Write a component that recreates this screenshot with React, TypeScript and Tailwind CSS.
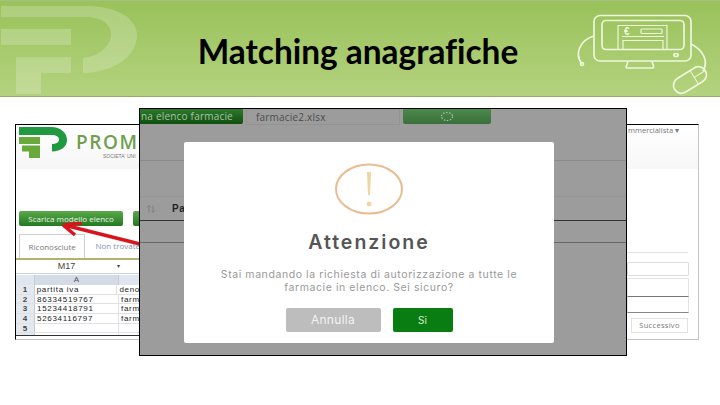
import { ArrowUpDown } from "lucide-react";

const sheetRows = [
  ["1", "partita iva", "deno"],
  ["2", "86334519767", "farm"],
  ["3", "15234418791", "farm"],
  ["4", "52634116797", "farm"],
  ["5", "", ""],
  ["", "", ""],
];

function HeaderMark() {
  return (
    <svg width="140" height="96" viewBox="0 0 140 96" className="shrink-0" fill="#fff">
      <path d="M1 5H85C118 5 137 18 137 34C137 55 115 71 83 72V57C100 55 111 45 111 33C111 22 100 16 85 16H1Z" fillOpacity="0.2" />
      <path d="M1 28H71V44H1Z" fillOpacity="0.2" />
      <path d="M16 56H71V72H41V93H16Z" fillOpacity="0.2" />
    </svg>
  );
}

function MonitorIcon() {
  return (
    <svg width="144" height="96" viewBox="576 0 144 96" className="shrink-0" fill="none" stroke="#eef6dc" strokeWidth="1.7">
      <rect x="594" y="14.5" width="97" height="45.5" rx="6" />
      <rect x="602" y="19.5" width="82" height="29" rx="4" />
      <path d="M618 48V24.5H667V48M623 48V39.5H663V48M622 35.5H664" strokeWidth="1.2" />
      <rect x="641" y="28" width="21" height="4.5" rx="0.8" strokeWidth="1.2" />
      <text x="624" y="34" fill="#eef6dc" stroke="none" fontSize="10" fontWeight="700" fontFamily="'Liberation Sans', sans-serif">€</text>
      <ellipse cx="676" cy="54" rx="2.2" ry="1.5" />
      <path d="M628 60C627 64 625 67 627 67H652C655 67 653 64 652 60" />
      <path d="M594 35C580 39 574 53 582 63" />
      <circle cx="582" cy="63" r="1.5" />
      <path d="M691 43C703 49 709 60 703 70" />
      <g transform="rotate(-32 690 79)">
        <rect x="672" y="71" width="36" height="16" rx="8" />
        <path d="M695 71.5V86.5M695 79H708" strokeWidth="1.1" />
      </g>
    </svg>
  );
}

function CompanyLogo() {
  return (
    <svg width="49" height="32" viewBox="0 0 49 32" className="shrink-0">
      <path d="M0 0H32C42 0 48 6 48 13C48 20 42 24 33 24.5V17C37 17 40 15.500 40 12.500C40 9.500 37 8 33 8H0Z" fill="#1f9a40" />
      <path d="M0 10H21V17H0Z" fill="#67a93a" />
      <path d="M3 18.500H21V31H10V24.500H3Z" fill="#67a93a" />
    </svg>
  );
}

function SheetTable() {
  return (
    <div className="flex h-[78px] w-full flex-col overflow-hidden border-t-2 border-b border-t-[#b8b070] border-b-[#333333] text-[#222] [font-family:'Liberation_Sans',sans-serif]">
      <div className="flex h-[14px] shrink-0 items-center border-b border-[#c9d2de] text-[9px] text-[#444]">
        <span className="w-[101px] text-center">M17</span>
        <span className="text-[6px]">▾</span>
      </div>
      <div className="mt-[1px] flex h-[10px] shrink-0 bg-[#dfe6ef] text-[8px] text-[#555]">
        <span className="w-[19px] border-r border-[#c3ccd8]" />
        <span className="w-[84px] border-r border-[#c3ccd8] bg-[#d3dbe6] text-center leading-[10px]">A</span>
      </div>
      {sheetRows.map((row, i) => (
        <div key={i} className="flex h-[9.67px] shrink-0 border-b border-[#dde1e6] text-[8px] leading-[9px]">
          <span className="w-[19px] border-r border-[#c3ccd8] bg-[#e4e9f0] text-center font-bold text-[#444]">{row[0]}</span>
          <span className="w-[84px] border-r border-[#dde1e6] pl-[2px] tracking-[0.7px]">{row[1]}</span>
          <span className="pl-[2px] tracking-[0.7px]">{row[2]}</span>
        </div>
      ))}
    </div>
  );
}

function ScreenshotBehind() {
  return (
    <section className="ml-[15px] mt-[27px] flex h-[216px] w-[684px] justify-between border-t border-l border-r border-b border-t-black border-l-black border-r-[#c4c4c4] border-b-[#c4c4c4] bg-white">
      {/* left side of the capture */}
      <div className="flex w-[124px] shrink-0 flex-col">
        <div className="h-[44px] bg-gradient-to-b from-white to-[#f6f6f6] pl-[3px] pt-[2px]">
          <div className="flex items-start">
            <CompanyLogo />
            <div className="flex flex-col overflow-hidden">
              <span className="mt-[7px] pl-[8px] text-[19px] font-semibold leading-[17px] tracking-[1.6px] text-[#6f9f4f] [font-family:'Open_Sans',sans-serif]">PROM</span>
              <span className="mt-[3px] pl-[35px] text-[5px] leading-[5px] whitespace-nowrap text-[#777] [font-family:'Liberation_Sans',sans-serif]">SOCIETA' UNI</span>
            </div>
          </div>
        </div>
        <div className="flex gap-[10px] pl-[3px] pt-[42px]">
          <div className="flex h-[15px] w-[104px] shrink-0 items-center justify-center rounded-[2px] bg-gradient-to-b from-[#5aa84a] to-[#217a21] text-[8px] text-[#eaf5e6] [font-family:'Open_Sans',sans-serif]">Scarica modello elenco</div>
          <div className="h-[15px] w-[7px] rounded-l-[2px] bg-gradient-to-b from-[#5aa84a] to-[#217a21]" />
        </div>
        <div className="mt-[8px] flex items-center pl-[3px] text-[8px] [font-family:'Open_Sans',sans-serif]">
          <span className="flex h-[24px] w-[69px] items-center justify-center border border-b-0 border-[#cfcfcf] text-[#7a7a7a]">Riconosciute</span>
          <span className="whitespace-nowrap pl-[10px] text-[#7d93ad]">Non trovate</span>
        </div>
        <SheetTable />
      </div>

      {/* right side of the capture */}
      <div className="flex w-[71px] shrink-0 flex-col">
        <div className="h-[44px] bg-gradient-to-b from-white to-[#f7f7f7] pr-[19px] pt-[1px] text-right text-[7.5px] leading-[9px] whitespace-nowrap text-[#777] [font-family:'Open_Sans',sans-serif]">mmercialista ▾</div>
        <div className="mr-[10px] mt-[83px] border-t border-[#e3e3e3]" />
        <div className="mr-[9px] mt-[9px] h-[14px] rounded-[1px] border border-[#dcdcdc]" />
        <div className="mr-[9px] mt-[2px] h-[18px] border border-b-0 border-[#e4e4e4]" />
        <div className="mr-[9px] h-[17px] border-t border-b border-x border-t-[#777] border-b-[#888] border-x-[#e4e4e4]" />
        <div className="mr-[10px] mt-[5px] flex h-[15px] justify-end">
          <span className="flex w-[57px] items-center justify-center border border-[#e2e2e2] text-[7.5px] tracking-[0.3px] text-[#777] [font-family:'Open_Sans',sans-serif]">Successivo</span>
        </div>
      </div>
    </section>
  );
}

function ModalOverlay() {
  return (
    <div className="absolute left-[139px] top-[108px] h-[248px] w-[488px] overflow-hidden border border-black bg-[#9c9c9c]">
      <div className="flex h-[15px] items-start text-[10px] [font-family:'Open_Sans',sans-serif]">
        <div className="flex h-[15px] w-[103px] items-center overflow-hidden whitespace-nowrap rounded-br-[2px] bg-gradient-to-b from-[#2e7a2e] to-[#0f4f0f] pl-[1px] tracking-[0.2px] text-[#a9c5a3]">na elenco farmacie</div>
        <div className="ml-[3px] flex h-[16px] w-[154px] items-center border border-[#939393] pl-[9px] tracking-[0.2px] text-[#4c4c4c]">farmacie2.xlsx</div>
        <div className="ml-[3px] flex h-[15px] w-[88px] items-center justify-center rounded-b-[2px] bg-gradient-to-b from-[#4c8a4c] to-[#3a6f3a]">
          <svg width="14" height="11" viewBox="0 0 14 11" fill="none" stroke="#a9bfa5" strokeWidth="1.2" strokeDasharray="1.6 1.4">
            <ellipse cx="7" cy="5.5" rx="5.5" ry="4" />
          </svg>
        </div>
      </div>
      <div className="mt-[36px] border-t border-[#8a8a8a]" />
      <div className="mt-[35px] flex h-[24px] items-center border-t border-[#959595]">
        <ArrowUpDown className="ml-[6px] h-[10px] w-[10px] text-[#7d7d7d]" />
        <span className="ml-[16px] text-[10px] font-bold tracking-[0.5px] text-[#222] [font-family:'Liberation_Sans',sans-serif]">Pa</span>
      </div>
      <div className="border-t border-[#333]" />
      <div className="mt-[21px] border-t border-[#666]" />
    </div>
  );
}

function Dialog() {
  return (
    <div className="absolute left-[184px] top-[142px] flex h-[201px] w-[370px] flex-col items-center rounded-[2px] bg-white [font-family:'Inter',sans-serif]">
      <svg width="70" height="54" viewBox="0 0 70 54" className="mt-[20px] shrink-0">
        <ellipse cx="35" cy="27" rx="33" ry="24.5" fill="none" stroke="#e9bd92" strokeWidth="2" />
        <path d="M33 10H37L36 33H34Z" fill="#efd6a0" />
        <circle cx="35" cy="42" r="2.4" fill="#efd6a0" />
      </svg>
      <h2 className="mt-[14px] text-[19.5px] font-semibold leading-[24px] tracking-[2px] text-[#555]">Attenzione</h2>
      <p className="mt-[15px] text-center text-[10.5px] leading-[12.5px] tracking-[0.58px] text-[#999]">
        Stai mandando la richiesta di autorizzazione a tutte le
        <br />
        farmacie in elenco. Sei sicuro?
      </p>
      <div className="mt-[14px] flex gap-[12px]">
        <button className="h-[24px] w-[95px] rounded-[2px] bg-[#bdbdbd] text-[12px] tracking-[0.3px] text-[#f2f2f2]">Annulla</button>
        <button className="h-[24px] w-[60px] rounded-[2px] bg-[#0a7d12] text-[10px] text-[#d7ecd7]">Si</button>
      </div>
    </div>
  );
}

export default function App() {
  return (
    <div className="relative h-[405px] w-[720px] overflow-hidden bg-white">
      <header className="flex h-[97px] items-center border-y border-y-[#93ad6c] border-t-[#a9bd8a] bg-gradient-to-b from-[#99c25a] to-[#b4d27e]">
        <HeaderMark />
        <h1 className="flex-1 pt-[6px] text-center text-[33.4px] font-bold leading-none text-black [font-family:'Lato',sans-serif] [font-variant-ligatures:none]">Matching anagrafiche</h1>
        <MonitorIcon />
      </header>

      <ScreenshotBehind />

      {/* red arrow drawn on the capture */}
      <svg width="90" height="30" viewBox="0 0 90 30" className="absolute left-[55px] top-[222px]" fill="none">
        <path d="M9 3L85 22M8 3L27 1M8 3L20 13" stroke="#d8141c" strokeWidth="3.5" />
      </svg>

      <ModalOverlay />
      <Dialog />
    </div>
  );
}
